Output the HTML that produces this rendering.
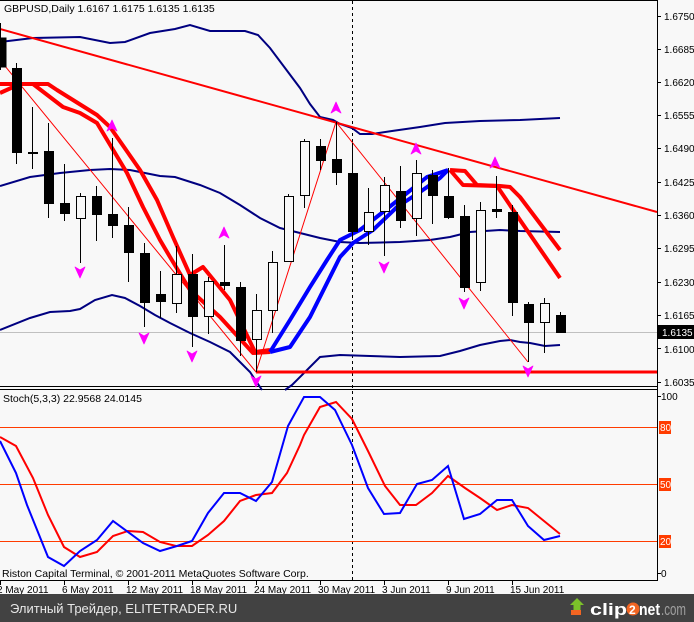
<!DOCTYPE html>
<html><head><meta charset="utf-8"><style>
html,body{margin:0;padding:0;background:#f8f8f8;}
svg{display:block;font-family:"Liberation Sans","DejaVu Sans",sans-serif;}
</style></head><body>
<svg width="694" height="622" viewBox="0 0 694 622" xmlns="http://www.w3.org/2000/svg">
<rect x="0" y="0" width="694" height="622" fill="#f8f8f8"/>
<line x1="0" y1="0.5" x2="658" y2="0.5" stroke="#000"/>
<line x1="657.5" y1="0" x2="657.5" y2="581" stroke="#000"/>
<line x1="0" y1="386.5" x2="658" y2="386.5" stroke="#000"/>
<line x1="0" y1="389.5" x2="658" y2="389.5" stroke="#000"/>
<line x1="0" y1="580.5" x2="658" y2="580.5" stroke="#000"/>
<line x1="0" y1="332.5" x2="657" y2="332.5" stroke="#c0c0c0"/>
<line x1="352.5" y1="1" x2="352.5" y2="580" stroke="#000" stroke-dasharray="3,3"/>
<g fill="none" stroke="#000080" stroke-width="2">
<polyline points="0,42 33,38 80,37 110,43 125,42 150,33 175,29 190,25 210,31 245,31 258,35 270,48 285,68 300,88 310,104 320,117 333,120 340,124 352,128 360,134 372,134 392,131 420,127 445,123 480,121 520,120 560,118"/>
<polyline points="0,186 30,177 60,173 90,170 110,169 130,170 160,176 175,177 200,185 220,193 240,205 260,218 280,228 300,233 320,238 340,242 360,243 400,242 430,240 450,237 470,232 500,230 520,231 560,232"/>
<polyline points="0,330 30,318 50,312 70,311 80,309 95,300 112,295 125,298 140,306 155,315 170,323 190,333 210,342 230,352 240,362 250,372 258,384 262,390"/>
<polyline points="285,390 292,385 320,357 340,355 370,356 400,357 440,356 460,351 480,345 500,341 510,340 520,342 530,343 545,346 560,345"/>
</g>
<line x1="0" y1="29" x2="657" y2="212" stroke="#ff0000" stroke-width="2"/>
<line x1="256" y1="372" x2="657" y2="372" stroke="#ff0000" stroke-width="3"/>
<polyline fill="none" stroke="#ff0000" stroke-width="1" points="0,60 256,372 336,122 528,362"/>
<g fill="none" stroke="#ff0000" stroke-width="4" stroke-linejoin="round">
<polyline points="0,84 48,84 57,90 97,115 110,127 140,170 157,200 173,237 190,275 203,267 230,300 255,352 270,350"/>
<polyline points="0,93 20,84 33,84 63,107 80,113 97,123 127,173 143,207 160,240 170,257 190,290 220,317 253,353 270,352"/>
<polyline points="450,170 465,171 477,185 500,186 510,187 520,197 560,250"/>
<polyline points="450,170 463,185 497,186 520,220 560,278"/>
</g>
<g fill="none" stroke="#0000ff" stroke-width="4" stroke-linejoin="round">
<polyline points="270,352 290,320 310,287 327,260 340,240 360,230 383,212 407,193 427,177 448,170"/>
<polyline points="270,352 290,347 310,317 330,277 340,257 353,243 373,230 397,207 420,192 440,178 448,170"/>
</g>
<g stroke="#000" stroke-width="1">
<line x1="0.5" y1="23" x2="0.5" y2="70"/><rect x="-4" y="38" width="10" height="29" fill="#000"/>
<line x1="16.5" y1="63" x2="16.5" y2="164"/><rect x="12" y="68" width="10" height="85" fill="#000" stroke="none"/>
<line x1="32.5" y1="107" x2="32.5" y2="169"/><rect x="28" y="152" width="10" height="2" fill="#000" stroke="none"/>
<line x1="48.5" y1="123" x2="48.5" y2="218"/><rect x="44" y="151" width="10" height="53" fill="#000" stroke="none"/>
<line x1="64.5" y1="164" x2="64.5" y2="221"/><rect x="60" y="203" width="10" height="11" fill="#000" stroke="none"/>
<line x1="80.5" y1="193" x2="80.5" y2="263"/><rect x="76.5" y="196.5" width="9" height="22" fill="#f8f8f8"/>
<line x1="96.5" y1="186" x2="96.5" y2="241"/><rect x="92" y="196" width="10" height="19" fill="#000" stroke="none"/>
<line x1="112.5" y1="138" x2="112.5" y2="238"/><rect x="108" y="214" width="10" height="12" fill="#000" stroke="none"/>
<line x1="128.5" y1="207" x2="128.5" y2="282"/><rect x="124" y="225" width="10" height="28" fill="#000" stroke="none"/>
<line x1="144.5" y1="243" x2="144.5" y2="327"/><rect x="140" y="253" width="10" height="50" fill="#000" stroke="none"/>
<line x1="160.5" y1="271" x2="160.5" y2="318"/><rect x="156" y="294" width="10" height="8" fill="#000" stroke="none"/>
<line x1="176.5" y1="246" x2="176.5" y2="313"/><rect x="172.5" y="274.5" width="9" height="29" fill="#f8f8f8"/>
<line x1="192.5" y1="254" x2="192.5" y2="347"/><rect x="188" y="274" width="10" height="43" fill="#000" stroke="none"/>
<line x1="208.5" y1="277" x2="208.5" y2="334"/><rect x="204.5" y="281.5" width="9" height="35" fill="#f8f8f8"/>
<line x1="224.5" y1="245" x2="224.5" y2="290"/><rect x="220" y="282" width="10" height="4" fill="#000" stroke="none"/>
<line x1="240.5" y1="282" x2="240.5" y2="356"/><rect x="236" y="287" width="10" height="54" fill="#000" stroke="none"/>
<line x1="256.5" y1="294" x2="256.5" y2="372"/><rect x="252.5" y="310.5" width="9" height="29" fill="#f8f8f8"/>
<line x1="272.5" y1="251" x2="272.5" y2="333"/><rect x="268.5" y="262.5" width="9" height="48" fill="#f8f8f8"/>
<line x1="288.5" y1="194" x2="288.5" y2="262"/><rect x="284.5" y="196.5" width="9" height="65" fill="#f8f8f8"/>
<line x1="304.5" y1="139" x2="304.5" y2="208"/><rect x="300.5" y="141.5" width="9" height="54" fill="#f8f8f8"/>
<line x1="320.5" y1="139" x2="320.5" y2="170"/><rect x="316" y="146" width="10" height="15" fill="#000" stroke="none"/>
<line x1="336.5" y1="122" x2="336.5" y2="185"/><rect x="332" y="159" width="10" height="14" fill="#000" stroke="none"/>
<line x1="352.5" y1="143" x2="352.5" y2="240"/><rect x="348" y="173" width="10" height="59" fill="#000" stroke="none"/>
<line x1="368.5" y1="188" x2="368.5" y2="245"/><rect x="364.5" y="212.5" width="9" height="19" fill="#f8f8f8"/>
<line x1="384.5" y1="177" x2="384.5" y2="256"/><rect x="380.5" y="185.5" width="9" height="26" fill="#f8f8f8"/>
<line x1="400.5" y1="166" x2="400.5" y2="228"/><rect x="396" y="191" width="10" height="30" fill="#000" stroke="none"/>
<line x1="416.5" y1="160" x2="416.5" y2="236"/><rect x="412.5" y="173.5" width="9" height="45" fill="#f8f8f8"/>
<line x1="432.5" y1="170" x2="432.5" y2="224"/><rect x="428" y="175" width="10" height="21" fill="#000" stroke="none"/>
<line x1="448.5" y1="168" x2="448.5" y2="219"/><rect x="444" y="196" width="10" height="22" fill="#000" stroke="none"/>
<line x1="464.5" y1="205" x2="464.5" y2="292"/><rect x="460" y="216" width="10" height="72" fill="#000" stroke="none"/>
<line x1="480.5" y1="202" x2="480.5" y2="291"/><rect x="476.5" y="210.5" width="9" height="72" fill="#f8f8f8"/>
<line x1="496.5" y1="176" x2="496.5" y2="218"/><rect x="492" y="209" width="10" height="3" fill="#000" stroke="none"/>
<line x1="512.5" y1="205" x2="512.5" y2="316"/><rect x="508" y="212" width="10" height="91" fill="#000" stroke="none"/>
<line x1="528.5" y1="302" x2="528.5" y2="362"/><rect x="524" y="304" width="10" height="19" fill="#000" stroke="none"/>
<line x1="544.5" y1="298" x2="544.5" y2="353"/><rect x="540.5" y="303.5" width="9" height="19" fill="#f8f8f8"/>
<line x1="560.5" y1="312" x2="560.5" y2="333"/><rect x="556" y="315" width="10" height="18" fill="#000" stroke="none"/>
</g>
<defs>
<path id="up" d="M0,-6 L5,5 L0,2 L-5,5 Z" fill="#ff00ff" stroke="#ff00ff" stroke-width="0.8" stroke-linejoin="round"/>
<path id="dn" d="M0,6 L5,-5 L0,-2 L-5,-5 Z" fill="#ff00ff" stroke="#ff00ff" stroke-width="0.8" stroke-linejoin="round"/>
</defs>
<use href="#up" x="112" y="126"/><use href="#up" x="336" y="108"/><use href="#up" x="224" y="233"/><use href="#up" x="416" y="149"/><use href="#up" x="495" y="163"/>
<use href="#dn" x="80" y="272"/><use href="#dn" x="144" y="338"/><use href="#dn" x="192" y="356"/><use href="#dn" x="256" y="381"/><use href="#dn" x="384" y="267"/><use href="#dn" x="464" y="303"/><use href="#dn" x="528" y="371"/>
<text x="4" y="12" font-size="10.5" fill="#000">GBPUSD,Daily  1.6167 1.6175 1.6135 1.6135</text>
<g font-size="10" fill="#000">
<text x="664" y="20">1.6750</text><text x="664" y="53">1.6685</text><text x="664" y="86">1.6620</text><text x="664" y="119">1.6555</text><text x="664" y="152">1.6490</text><text x="664" y="186">1.6425</text><text x="664" y="219">1.6360</text><text x="664" y="252">1.6295</text><text x="664" y="286">1.6230</text><text x="664" y="319">1.6165</text><text x="664" y="353">1.6100</text><text x="664" y="386">1.6035</text>
</g>
<g stroke="#000"><line x1="658" y1="16.5" x2="661" y2="16.5"/><line x1="658" y1="49.5" x2="661" y2="49.5"/><line x1="658" y1="82.5" x2="661" y2="82.5"/><line x1="658" y1="115.5" x2="661" y2="115.5"/><line x1="658" y1="148.5" x2="661" y2="148.5"/><line x1="658" y1="182.5" x2="661" y2="182.5"/><line x1="658" y1="215.5" x2="661" y2="215.5"/><line x1="658" y1="248.5" x2="661" y2="248.5"/><line x1="658" y1="282.5" x2="661" y2="282.5"/><line x1="658" y1="315.5" x2="661" y2="315.5"/><line x1="658" y1="348.5" x2="661" y2="348.5"/><line x1="658" y1="382.5" x2="661" y2="382.5"/></g>
<rect x="658" y="325" width="36" height="14" fill="#000"/>
<text x="662" y="336" font-size="10" fill="#fff">1.6135</text>
<g stroke="#ff3c00" stroke-width="1"><line x1="0" y1="427.5" x2="657" y2="427.5"/><line x1="0" y1="484.5" x2="657" y2="484.5"/><line x1="0" y1="541.5" x2="657" y2="541.5"/></g>
<text x="3" y="402" font-size="10.5" fill="#000">Stoch(5,3,3) 22.9568 24.0145</text>
<polyline fill="none" stroke="#ff0000" stroke-width="2" points="0,437 16,446 33,478 48,515 64,547 80,557 97,552 113,536 128,531 143,532 160,542 176,546 192,546 208,535 224,521 240,501 256,495 272,493 287,473 300,445 304,435 320,407 336,402 352,419 368,451 385,486 400,505 416,505 432,493 448,476 465,488 480,498 497,510 512,505 528,508 544,521 560,534"/>
<polyline fill="none" stroke="#0000ff" stroke-width="2" points="0,441 16,473 27,505 48,557 64,566 80,551 97,540 113,521 143,543 160,551 177,546 192,541 208,513 224,493 240,493 256,501 272,482 288,426 304,397 320,397 335,410 352,445 368,488 384,514 400,513 417,484 432,480 448,466 464,519 480,514 497,500 512,500 528,526 544,540 560,536"/>
<text x="2" y="577" font-size="10.5" fill="#000">Riston Capital Terminal, © 2001-2011 MetaQuotes Software Corp.</text>
<g font-size="10" fill="#000"><text x="661" y="400">100</text><text x="661" y="577">0</text></g>
<rect x="659" y="421" width="12" height="13" fill="#ff3c00"/><text x="660" y="431" font-size="10" fill="#fff">80</text>
<rect x="659" y="478" width="12" height="13" fill="#ff3c00"/><text x="660" y="488" font-size="10" fill="#fff">50</text>
<rect x="659" y="535" width="12" height="13" fill="#ff3c00"/><text x="660" y="545" font-size="10" fill="#fff">20</text>
<g stroke="#000"><line x1="658" y1="396.5" x2="661" y2="396.5"/><line x1="658" y1="573.5" x2="661" y2="573.5"/></g>
<g stroke="#000"><line x1="0.5" y1="581" x2="0.5" y2="585"/><line x1="64.5" y1="581" x2="64.5" y2="585"/><line x1="128.5" y1="581" x2="128.5" y2="585"/><line x1="192.5" y1="581" x2="192.5" y2="585"/><line x1="256.5" y1="581" x2="256.5" y2="585"/><line x1="320.5" y1="581" x2="320.5" y2="585"/><line x1="384.5" y1="581" x2="384.5" y2="585"/><line x1="448.5" y1="581" x2="448.5" y2="585"/><line x1="512.5" y1="581" x2="512.5" y2="585"/></g>
<g font-size="10" fill="#000"><text x="-3" y="593">2 May 2011</text><text x="62" y="593">6 May 2011</text><text x="126" y="593">12 May 2011</text><text x="190" y="593">18 May 2011</text><text x="254" y="593">24 May 2011</text><text x="318" y="593">30 May 2011</text><text x="382" y="593">3 Jun 2011</text><text x="446" y="593">9 Jun 2011</text><text x="510" y="593">15 Jun 2011</text></g>
<rect x="0" y="594" width="694" height="28" fill="#424242"/>
<text x="10" y="613" font-size="13" fill="#e8e8e8">Элитный Трейдер, ELITETRADER.RU</text>
<path d="M577,598 L584,605 L580.5,605 L580.5,610 L573.5,610 L573.5,605 L570,605 Z" fill="#7cc12a"/>
<rect x="571" y="610" width="10" height="5" fill="#f26522"/>
<text x="590" y="615" font-size="17" font-weight="bold" fill="#fff" textLength="37" lengthAdjust="spacingAndGlyphs">clip</text>
<circle cx="633" cy="609" r="6.5" fill="#f26522"/>
<text x="629" y="614" font-size="12" font-weight="bold" fill="#fff">2</text>
<text x="639" y="615" font-size="17" font-weight="bold" fill="#fff" textLength="21" lengthAdjust="spacingAndGlyphs">net</text>
<text x="661" y="615" font-size="17" fill="#a0a0a0" textLength="25" lengthAdjust="spacingAndGlyphs">.com</text>
</svg>
</body></html>
